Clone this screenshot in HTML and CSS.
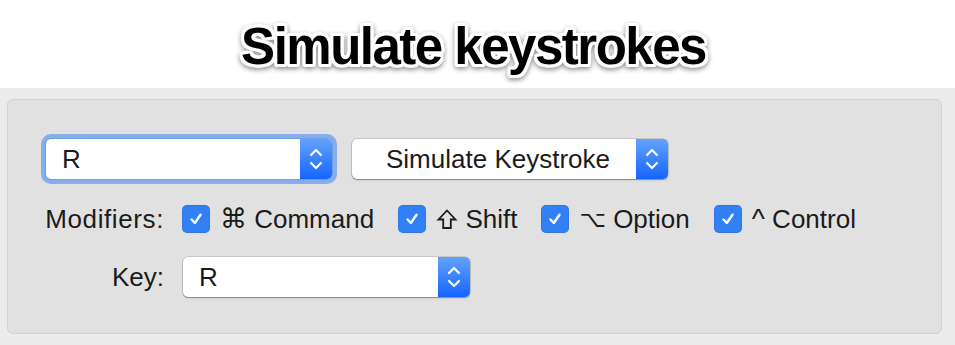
FILE: index.html
```html
<!DOCTYPE html>
<html>
<head>
<meta charset="utf-8">
<link rel="stylesheet" href="styles.css">
</head>
<body>
<header class="header">
  <h1 class="title">Simulate keystrokes</h1>
</header>
<main class="main">
  <section class="panel">
    <div class="row-top">
      <div class="popup popup-focus popup-combo">
        <span class="popup-label">R</span>
        <span class="stepper"><svg width="16" height="26" viewBox="0 0 16 26"><path d="M3 9 L8 4 L13 9 M3 17 L8 22 L13 17" fill="none" stroke="#fff" stroke-width="2.2" stroke-linecap="round" stroke-linejoin="round"/></svg></span>
      </div>
      <div class="popup popup-action">
        <span class="popup-label popup-label-action">Simulate Keystroke</span>
        <span class="stepper"><svg width="16" height="26" viewBox="0 0 16 26"><path d="M3 9 L8 4 L13 9 M3 17 L8 22 L13 17" fill="none" stroke="#fff" stroke-width="2.2" stroke-linecap="round" stroke-linejoin="round"/></svg></span>
      </div>
    </div>
    <div class="form">
      <span class="label label-mods">Modifiers:</span>
      <div class="mods">
        <label class="mod"><span class="check"><svg width="18" height="18" viewBox="0 0 18 18"><path d="M4.5 9.5 L7.8 13 L13.5 4.8" fill="none" stroke="#fff" stroke-width="2.4" stroke-linecap="round" stroke-linejoin="round"/></svg></span><span class="mod-text"><span class="sym">⌘</span> Command</span></label>
        <label class="mod"><span class="check"><svg width="18" height="18" viewBox="0 0 18 18"><path d="M4.5 9.5 L7.8 13 L13.5 4.8" fill="none" stroke="#fff" stroke-width="2.4" stroke-linecap="round" stroke-linejoin="round"/></svg></span><span class="mod-text"><svg class="shift-icon" width="22" height="22" viewBox="0 0 22 22" aria-label="⇧"><path d="M11 2.5 L19.5 11.5 L14.8 11.5 L14.8 20 L7.2 20 L7.2 11.5 L2.5 11.5 Z" fill="none" stroke="#1b1b1b" stroke-width="1.8" stroke-linejoin="miter"/></svg> Shift</span></label>
        <label class="mod"><span class="check"><svg width="18" height="18" viewBox="0 0 18 18"><path d="M4.5 9.5 L7.8 13 L13.5 4.8" fill="none" stroke="#fff" stroke-width="2.4" stroke-linecap="round" stroke-linejoin="round"/></svg></span><span class="mod-text"><span class="sym sym-opt">⌥</span> Option</span></label>
        <label class="mod"><span class="check"><svg width="18" height="18" viewBox="0 0 18 18"><path d="M4.5 9.5 L7.8 13 L13.5 4.8" fill="none" stroke="#fff" stroke-width="2.4" stroke-linecap="round" stroke-linejoin="round"/></svg></span><span class="mod-text"><span class="sym sym-ctrl">^</span> Control</span></label>
      </div>
      <span class="label">Key:</span>
      <div class="popup popup-key">
        <span class="popup-label">R</span>
        <span class="stepper"><svg width="16" height="26" viewBox="0 0 16 26"><path d="M3 9 L8 4 L13 9 M3 17 L8 22 L13 17" fill="none" stroke="#fff" stroke-width="2.2" stroke-linecap="round" stroke-linejoin="round"/></svg></span>
      </div>
    </div>
  </section>
</main>
</body>
</html>
```

FILE: styles.css
```css
* { box-sizing: border-box; }
html, body { margin: 0; padding: 0; }
body {
  width: 955px;
  height: 345px;
  background: #ececec;
  font-family: "Liberation Sans", Arial, sans-serif;
  color: #1b1b1b;
  overflow: hidden;
}
.header {
  height: 88px;
  background: #ffffff;
  padding-top: 18px;
}
.title {
  margin: 0;
  text-align: center;
  font-size: 51px;
  line-height: 58px;
  font-weight: bold;
  letter-spacing: -1.5px;
  color: #000;
  padding-right: 8px;
  text-shadow:
    2px 0 0 #fff, -2px 0 0 #fff, 0 2px 0 #fff, 0 -2px 0 #fff,
    3px 0 0 #fff, -3px 0 0 #fff, 0 3px 0 #fff, 0 -3px 0 #fff,
    2px 2px 0 #fff, -2px 2px 0 #fff, 2px -2px 0 #fff, -2px -2px 0 #fff,
    3px 2px 0 #fff, -3px 2px 0 #fff, 3px -2px 0 #fff, -3px -2px 0 #fff,
    2px 3px 0 #fff, -2px 3px 0 #fff, 2px -3px 0 #fff, -2px -3px 0 #fff;
  filter: drop-shadow(0 2px 2.5px rgba(0,0,0,0.45));
}
.main {
  padding: 11px 13px 0 7px;
}
.panel {
  height: 235px;
  background: #e1e1e1;
  border: 1px solid #d2d2d2;
  border-radius: 6px;
  padding-top: 39px;
}
.row-top {
  display: flex;
  align-items: center;
  gap: 20px;
  padding-left: 38px;
}
.popup {
  display: flex;
  align-items: stretch;
  height: 40px;
  background: #fff;
  border-radius: 5px;
  box-shadow: 0 0 0 0.5px rgba(0,0,0,0.22), 0 1px 1.5px rgba(0,0,0,0.35);
  font-size: 26px;
  overflow: hidden;
}
.popup-focus {
  overflow: visible;
  box-shadow: 0 0 0 1px #6e9ee6, 0 0 0 5px #86aeec;
}
.popup-focus .stepper { border-radius: 0 5px 5px 0; }
.popup-combo { width: 286px; }
.popup-action { width: 316px; }
.popup-key { width: 287px; margin-left: 1px; }
.popup-label {
  flex: 1;
  display: flex;
  align-items: center;
  padding-left: 16px;
  line-height: 1;
}
.popup-label-action { padding-left: 34px; }
.stepper {
  width: 32px;
  display: flex;
  align-items: center;
  justify-content: center;
  background: linear-gradient(#63a2fa, #1465ff);
}
.form {
  display: grid;
  grid-template-columns: 156px 1fr;
  column-gap: 18px;
  row-gap: 24px;
  align-items: center;
  margin-top: 26px;
}
.label {
  text-align: right;
  font-size: 26px;
  line-height: 28px;
}
.label-mods { letter-spacing: 0.6px; }
.mods {
  display: flex;
  align-items: center;
  gap: 24px;
}
.mod {
  display: flex;
  align-items: center;
  gap: 10px;
  font-size: 26px;
  line-height: 28px;
}
.mod-text {
  display: flex;
  align-items: center;
  white-space: pre;
}
.check {
  width: 28px;
  height: 28px;
  border-radius: 5px;
  background: #3180f6;
  display: flex;
  align-items: center;
  justify-content: center;
  box-shadow: inset 0 0 0 0.5px rgba(0,0,0,0.15);
}
.sym {
  font-family: "DejaVu Sans", sans-serif;
  font-size: 27px;
}
.sym-opt { font-size: 23px; }
.sym-ctrl {
  font-family: "Liberation Sans", Arial, sans-serif;
  font-size: 28px;
}
.shift-icon { display: block; }
```
